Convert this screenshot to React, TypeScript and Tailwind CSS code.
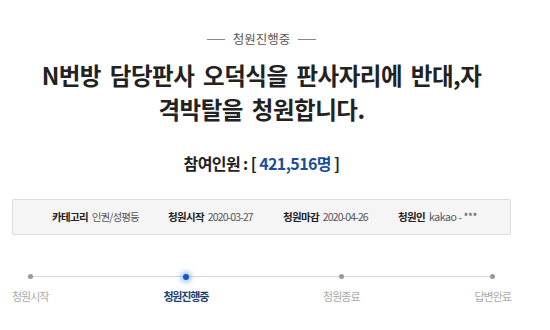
const info = [
	{ label: "카테고리", value: "인권/성평등", width: "w-[116px]", track: "tracking-[-0.9px]" },
	{ label: "청원시작", value: "2020-03-27", width: "w-[115px]", track: "tracking-[-0.9px]" },
	{ label: "청원마감", value: "2020-04-26", width: "w-[115px]", track: "tracking-[-0.9px]" },
	{ label: "청원인", value: "kakao - ***", width: "", track: "tracking-[-0.4px]" },
]

const steps = [
	{ name: "청원시작", active: false },
	{ name: "청원진행중", active: true },
	{ name: "청원종료", active: false },
	{ name: "답변완료", active: false },
]

export default function App() {
	return (
		<div
			className="h-[330px] w-[550px] overflow-hidden bg-white"
			style={{ fontFamily: '"Noto Sans CJK KR", "Noto Sans", sans-serif' }}
		>
			<div className="ml-3 w-[499px] pt-[29px]">
				<div className="flex items-center justify-center gap-[8px] text-[12.5px] leading-[20px] text-[#555]">
					<span className="h-px w-[18px] bg-[#888]" />
					<span>청원진행중</span>
					<span className="h-px w-[18px] bg-[#888]" />
				</div>
				<h1 className="mt-[9px] text-center text-[23.5px] font-bold leading-[34px] tracking-[-0.5px] text-[#222] [word-spacing:4px]">
					N번방 담당판사 오덕식을 판사자리에 반대,자
					<br />
					격박탈을 청원합니다.
				</h1>
				<div className="mt-[25px] text-center text-[16px] font-bold leading-[24px] tracking-[-0.6px] text-[#222]">
					참여인원 : [ <span className="text-[#1b4d9a]">421,516명</span> ]
				</div>
				<div className="mt-[24px] flex h-[36px] items-center rounded-[2px] border border-[#dcdcdc] bg-[#f5f5f5] pl-[39px] leading-[14px]">
					{info.map((item) => (
						<div key={item.label} className={`flex items-center gap-[4px] ${item.width}`}>
							<span className="text-[10.5px] font-bold tracking-[-0.7px] text-[#222]">{item.label}</span>
							<span className={`text-[10.5px] text-[#555] ${item.track}`}>{item.value}</span>
						</div>
					))}
				</div>
				<div className="relative mt-[33px]">
					<div className="absolute left-[16px] right-[16px] top-[8px] h-px bg-[#d6d6d6]" />
					<div className="relative flex justify-between">
						{steps.map((step) => (
							<div key={step.name} className="flex flex-col items-center">
								<div className="flex h-[17px] items-center justify-center">
									{step.active ? (
										<span className="h-[6px] w-[6px] rounded-full bg-[#0a5bc4] shadow-[0_0_4px_3px_rgba(80,150,240,0.45)]" />
									) : (
										<span className="h-[5px] w-[5px] rounded-full bg-[#999]" />
									)}
								</div>
								<span
									className={
										step.active
											? "mt-[4px] text-[11px] font-bold leading-[14px] tracking-[-1.2px] text-[#1d3f73]"
											: "mt-[4px] text-[11px] leading-[14px] tracking-[-1px] text-[#aaa]"
									}
								>
									{step.name}
								</span>
							</div>
						))}
					</div>
				</div>
			</div>
		</div>
	)
}
